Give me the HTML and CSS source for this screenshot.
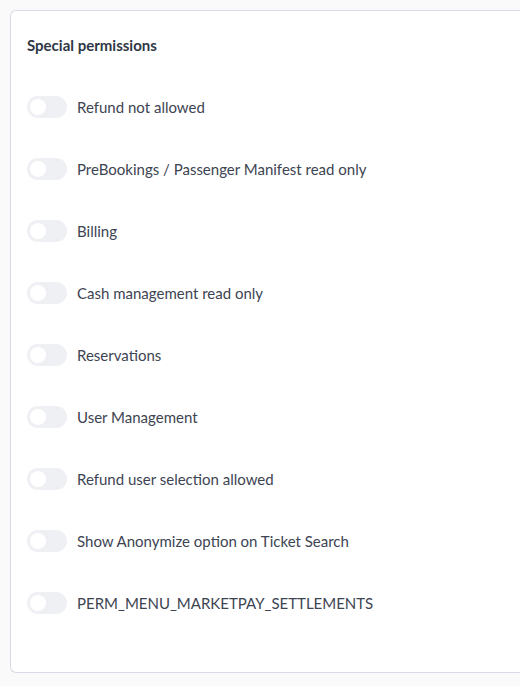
FILE: index.html
```html
<!DOCTYPE html>
<html>
<head>
<meta charset="utf-8">
<link rel="stylesheet" href="styles.css">
</head>
<body>
<div class="card">
  <h2 class="title">Special permissions</h2>
  <ul class="perm-list">
    <li class="perm"><span class="toggle"><span class="knob"></span></span><span class="label">Refund not allowed</span></li>
    <li class="perm"><span class="toggle"><span class="knob"></span></span><span class="label">PreBookings / Passenger Manifest read only</span></li>
    <li class="perm"><span class="toggle"><span class="knob"></span></span><span class="label">Billing</span></li>
    <li class="perm"><span class="toggle"><span class="knob"></span></span><span class="label">Cash management read only</span></li>
    <li class="perm"><span class="toggle"><span class="knob"></span></span><span class="label">Reservations</span></li>
    <li class="perm"><span class="toggle"><span class="knob"></span></span><span class="label">User Management</span></li>
    <li class="perm"><span class="toggle"><span class="knob"></span></span><span class="label">Refund user selection allowed</span></li>
    <li class="perm"><span class="toggle"><span class="knob"></span></span><span class="label">Show Anonymize option on Ticket Search</span></li>
    <li class="perm"><span class="toggle"><span class="knob"></span></span><span class="label">PERM_MENU_MARKETPAY_SETTLEMENTS</span></li>
  </ul>
</div>
</body>
</html>
```
FILE: styles.css
```css
html, body {
  margin: 0;
  padding: 0;
  background: #fafafa;
  font-family: "Lato", "Open Sans", sans-serif;
  color: #3d4452;
}
body {
  padding: 10px 0 0 10px;
  height: 686px;
  box-sizing: border-box;
  overflow: hidden;
}
.card {
  background: #ffffff;
  border: 1px solid #d9dae5;
  border-right: none;
  border-radius: 6px 0 0 6px;
  padding: 24px 16px 58px 16px;
}
.title {
  margin: 0;
  font-size: 15px;
  line-height: 20px;
  font-weight: 700;
  color: #2f3746;
}
.perm-list {
  list-style: none;
  margin: 41px 0 0 0;
  padding: 0;
  display: flex;
  flex-direction: column;
  gap: 40px;
}
.perm {
  display: flex;
  align-items: center;
  height: 22px;
  gap: 10px;
}
.toggle {
  width: 40px;
  height: 22px;
  border-radius: 11px;
  background: #eef0f4;
  display: flex;
  align-items: center;
  padding: 0 3px;
  box-sizing: border-box;
  flex: none;
}
.knob {
  width: 16px;
  height: 16px;
  border-radius: 50%;
  background: #ffffff;
}
.label {
  font-size: 15px;
  line-height: 20px;
}
```
